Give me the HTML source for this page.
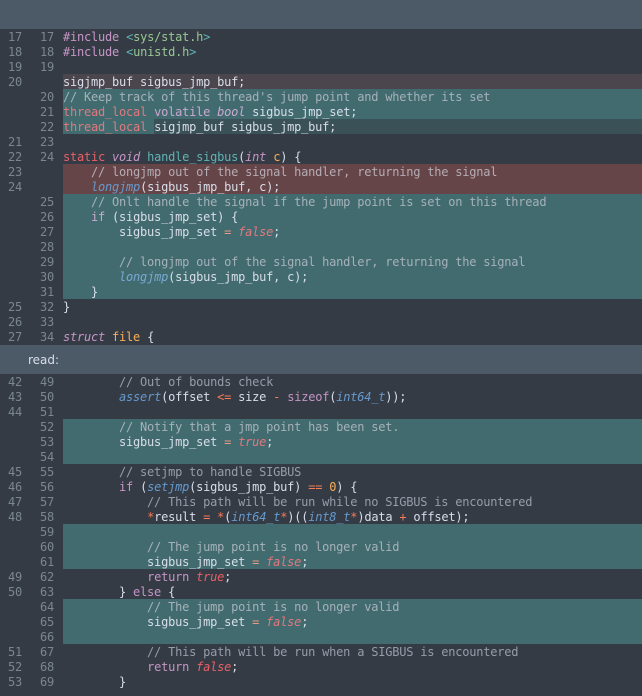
<!DOCTYPE html>
<html><head><meta charset="utf-8">
<style>
html,body{margin:0;padding:0;width:642px;height:696px;overflow:hidden;background:#343b45;}
.bar{position:absolute;left:0;width:642px;background:#4c5a67;}
.code{position:absolute;left:0;width:642px;}
.l{position:relative;height:15px;width:642px;font:12px/17px "DejaVu Sans Mono",monospace;letter-spacing:-.22px;white-space:pre;color:#d8dee9;}
.n{position:absolute;top:0;width:20px;text-align:right;color:#7b8691;}
.n.x{left:2px}.n.y{left:34px}
.t{position:absolute;left:63px;top:0;width:579px;height:15px;}
.A .t{background:#426b70;}
.D .t{background:#664549;}
.d .t{background:#4b454e;}
.a .t{background:#3b5158;}
.h{background:#426b70;position:absolute;left:0;top:0;width:91px;height:15px;}
u{text-decoration:none}
.c{color:#959da9}
.p{color:#c695c6}
.i{font-style:italic}
.r{color:#ec5f66}
.o{color:#f9ae58}
.s{color:#f97b58}
.b{color:#6699cc}
.g{color:#99c794}
.e{color:#5fb4b4}
.A .r{color:#e0797d}
.A .c{color:#a5b1b9}
.A .s{color:#e89a86}
.A .p{color:#c9a9cf}
.A .b{color:#79a9d2}
.D .c{color:#b5acb4}
#read{position:absolute;left:28px;top:345px;height:29px;font:12px/31px "DejaVu Sans",sans-serif;color:#d8dee9;}
</style></head>
<body>
<div class="bar" style="top:0;height:29px"></div>
<div class="code" style="top:29px">
<div class="l"><span class="n x">17</span><span class="n y">17</span><div class="t"><u class="p">#include</u> <u class="e">&lt;</u><u class="g">sys/stat.h</u><u class="e">&gt;</u></div></div>
<div class="l"><span class="n x">18</span><span class="n y">18</span><div class="t"><u class="p">#include</u> <u class="e">&lt;</u><u class="g">unistd.h</u><u class="e">&gt;</u></div></div>
<div class="l"><span class="n x">19</span><span class="n y">19</span><div class="t"></div></div>
<div class="l d"><span class="n x">20</span><div class="t">sigjmp_buf sigbus_jmp_buf;</div></div>
<div class="l A"><span class="n y">20</span><div class="t"><u class="c">// Keep track of this thread's jump point and whether its set</u></div></div>
<div class="l A"><span class="n y">21</span><div class="t"><u class="r">thread_local</u> <u class="p">volatile</u> <u class="p i">bool</u> sigbus_jmp_set;</div></div>
<div class="l a"><span class="n y">22</span><div class="t"><div class="h"></div><span style="position:relative"><u style="color:#e0797d">thread_local</u> sigjmp_buf sigbus_jmp_buf;</span></div></div>
<div class="l"><span class="n x">21</span><span class="n y">23</span><div class="t"></div></div>
<div class="l"><span class="n x">22</span><span class="n y">24</span><div class="t"><u class="r">static</u> <u class="p i">void</u> <u class="e">handle_sigbus</u>(<u class="p i">int</u> <u class="o">c</u>) {</div></div>
<div class="l D"><span class="n x">23</span><div class="t"><u class="c">    // longjmp out of the signal handler, returning the signal</u></div></div>
<div class="l D"><span class="n x">24</span><div class="t">    <u class="b i">longjmp</u>(sigbus_jmp_buf, c);</div></div>
<div class="l A"><span class="n y">25</span><div class="t"><u class="c">    // Onlt handle the signal if the jump point is set on this thread</u></div></div>
<div class="l A"><span class="n y">26</span><div class="t">    <u class="p">if</u> (sigbus_jmp_set) {</div></div>
<div class="l A"><span class="n y">27</span><div class="t">        sigbus_jmp_set <u class="s">=</u> <u class="r i">false</u>;</div></div>
<div class="l A"><span class="n y">28</span><div class="t"></div></div>
<div class="l A"><span class="n y">29</span><div class="t"><u class="c">        // longjmp out of the signal handler, returning the signal</u></div></div>
<div class="l A"><span class="n y">30</span><div class="t">        <u class="b i">longjmp</u>(sigbus_jmp_buf, c);</div></div>
<div class="l A"><span class="n y">31</span><div class="t">    }</div></div>
<div class="l"><span class="n x">25</span><span class="n y">32</span><div class="t">}</div></div>
<div class="l"><span class="n x">26</span><span class="n y">33</span><div class="t"></div></div>
<div class="l"><span class="n x">27</span><span class="n y">34</span><div class="t"><u class="p i">struct</u> <u class="o">file</u> {</div></div>
</div>
<div class="bar" style="top:345px;height:29px"></div>
<div id="read">read:</div>
<div class="code" style="top:374px">
<div class="l"><span class="n x">42</span><span class="n y">49</span><div class="t"><u class="c">        // Out of bounds check</u></div></div>
<div class="l"><span class="n x">43</span><span class="n y">50</span><div class="t">        <u class="b i">assert</u>(offset <u class="s">&lt;=</u> size <u class="s">-</u> <u class="p">sizeof</u>(<u class="b i">int64_t</u>));</div></div>
<div class="l"><span class="n x">44</span><span class="n y">51</span><div class="t"></div></div>
<div class="l A"><span class="n y">52</span><div class="t"><u class="c">        // Notify that a jmp point has been set.</u></div></div>
<div class="l A"><span class="n y">53</span><div class="t">        sigbus_jmp_set <u class="s">=</u> <u class="r i">true</u>;</div></div>
<div class="l A"><span class="n y">54</span><div class="t"></div></div>
<div class="l"><span class="n x">45</span><span class="n y">55</span><div class="t"><u class="c">        // setjmp to handle SIGBUS</u></div></div>
<div class="l"><span class="n x">46</span><span class="n y">56</span><div class="t">        <u class="p">if</u> (<u class="b i">setjmp</u>(sigbus_jmp_buf) <u class="s">==</u> <u class="o">0</u>) {</div></div>
<div class="l"><span class="n x">47</span><span class="n y">57</span><div class="t"><u class="c">            // This path will be run while no SIGBUS is encountered</u></div></div>
<div class="l"><span class="n x">48</span><span class="n y">58</span><div class="t">            <u class="s">*</u>result <u class="s">=</u> <u class="s">*</u>(<u class="b i">int64_t</u><u class="s">*</u>)((<u class="b i">int8_t</u><u class="s">*</u>)data <u class="s">+</u> offset);</div></div>
<div class="l A"><span class="n y">59</span><div class="t"></div></div>
<div class="l A"><span class="n y">60</span><div class="t"><u class="c">            // The jump point is no longer valid</u></div></div>
<div class="l A"><span class="n y">61</span><div class="t">            sigbus_jmp_set <u class="s">=</u> <u class="r i">false</u>;</div></div>
<div class="l"><span class="n x">49</span><span class="n y">62</span><div class="t">            <u class="p">return</u> <u class="r i">true</u>;</div></div>
<div class="l"><span class="n x">50</span><span class="n y">63</span><div class="t">        } <u class="p">else</u> {</div></div>
<div class="l A"><span class="n y">64</span><div class="t"><u class="c">            // The jump point is no longer valid</u></div></div>
<div class="l A"><span class="n y">65</span><div class="t">            sigbus_jmp_set <u class="s">=</u> <u class="r i">false</u>;</div></div>
<div class="l A"><span class="n y">66</span><div class="t"></div></div>
<div class="l"><span class="n x">51</span><span class="n y">67</span><div class="t"><u class="c">            // This path will be run when a SIGBUS is encountered</u></div></div>
<div class="l"><span class="n x">52</span><span class="n y">68</span><div class="t">            <u class="p">return</u> <u class="r i">false</u>;</div></div>
<div class="l"><span class="n x">53</span><span class="n y">69</span><div class="t">        }</div></div>
</div>
</body></html>
